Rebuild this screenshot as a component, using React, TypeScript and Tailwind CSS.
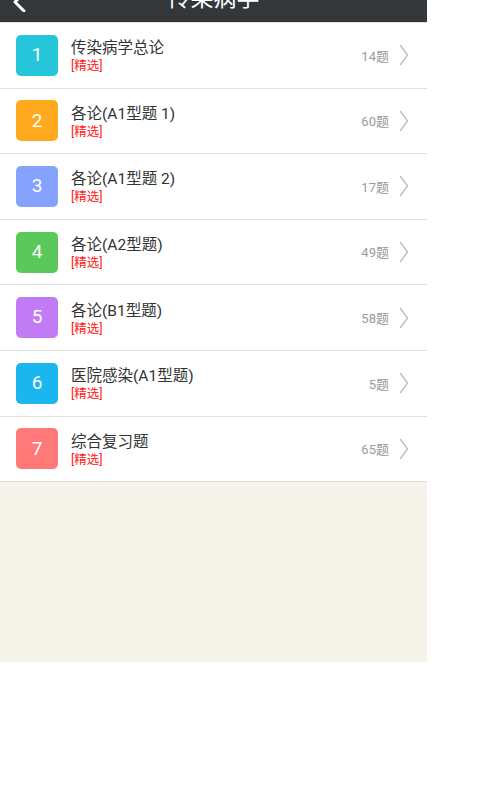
import React from 'react';

const items = [
  { n: 1, title: '传染病学总论', count: 14, color: 'bg-[#26c6da]' },
  { n: 2, title: '各论(A1型题 1)', count: 60, color: 'bg-[#ffa91f]' },
  { n: 3, title: '各论(A1型题 2)', count: 17, color: 'bg-[#86a2ff]' },
  { n: 4, title: '各论(A2型题)', count: 49, color: 'bg-[#5bc85b]' },
  { n: 5, title: '各论(B1型题)', count: 58, color: 'bg-[#c17cf5]' },
  { n: 6, title: '医院感染(A1型题)', count: 5, color: 'bg-[#1bb6ee]' },
  { n: 7, title: '综合复习题', count: 65, color: 'bg-[#ff7979]' },
];

const Chevron = () => (
  <svg width="10" height="22" viewBox="0 0 10 22" fill="none">
    <path d="M1.5 1.5 L8.5 11 L1.5 20.5" stroke="#bdbdbd" strokeWidth="1.4" strokeLinecap="round" strokeLinejoin="round" />
  </svg>
);

export default function App() {
  return (
    <div className="w-[480px] h-[800px] bg-white font-['Roboto','Noto_Sans_CJK_SC',sans-serif]">
      <div className="w-[427px] h-[662px] bg-[#f6f3eb] flex flex-col">
        {/* title bar, scrolled mostly off screen */}
        <div className="h-[22px] bg-[#33373a] relative overflow-hidden">
          <svg className="absolute left-[10px] -top-[10px]" width="22" height="22" viewBox="0 0 22 22" fill="none">
            <path d="M14 3 L5 12 L14 21" stroke="white" strokeWidth="3" strokeLinecap="round" strokeLinejoin="round" />
          </svg>
          <div className="absolute inset-x-0 -top-[16px] text-center text-white text-[23px] leading-[30px]">传染病学</div>
        </div>
        <div className="h-px bg-[#e2e2e2]" />
        <div className="bg-white">
          {items.map((it) => (
            <div key={it.n} className="h-[65.6px] flex items-center border-b border-[#dedede] pl-4 pr-[18px]">
              <div className={`w-[42px] h-[41px] rounded-[5px] ${it.color} flex items-center justify-center text-white text-[19px]`}>
                {it.n}
              </div>
              <div className="ml-[13px] mt-[2px] flex flex-col flex-1">
                <div className="text-[15.5px] leading-[19px] text-[#333333]">{it.title}</div>
                <div className="text-[12.5px] leading-[15px] text-[#ff2020]">[精选]</div>
              </div>
              <div className="text-[13px] text-[#9a9a9a] mr-[10px] mt-[2px]">{it.count}题</div>
              <Chevron />
            </div>
          ))}
        </div>
      </div>
    </div>
  );
}
